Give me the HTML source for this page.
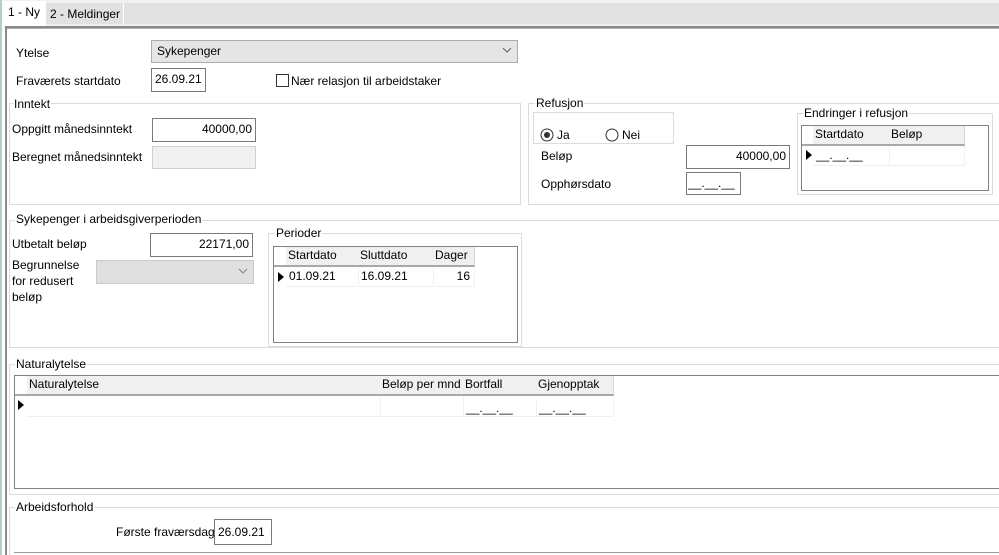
<!DOCTYPE html>
<html style="overflow:hidden"><head><meta charset="utf-8"><style>
*{box-sizing:border-box;margin:0;padding:0}
html,body{width:999px;height:555px;overflow:hidden}
body{background:#fff;font-family:"Liberation Sans",Arial,sans-serif;font-size:12px;color:#000;position:relative}
div,span{position:absolute}
.t{white-space:nowrap;line-height:14px}
.gb{border:1px solid #dcdcdc}
.gt{background:#fff;padding:0 1px;line-height:14px;white-space:nowrap}
.tb{border:1px solid #7a7a7a;background:#fff;line-height:20px;padding:0 3px;white-space:nowrap}
.r{text-align:right}
.grid{border:1px solid #828282;background:#fff}
.h{background:#f0f0f0;border-right:1px solid #d5d5d5;border-bottom:2px solid #a8a8a8;line-height:17px;padding-left:2px;white-space:nowrap}
.c{border-right:1px solid #f0f0f0;border-bottom:1px solid #f0f0f0;line-height:18px;padding-left:3px;white-space:nowrap}
.mask{font-size:12px}
.arr{width:0;height:0;border-top:5px solid transparent;border-bottom:5px solid transparent;border-left:6px solid #000}
</style></head><body>
<div style="left:0;top:0;width:999px;height:28px;background:#f0f0f0"></div>
<div style="left:0;top:0;width:2px;height:555px;background:#b4d0c0"></div>
<div style="left:46px;top:3px;width:953px;height:21px;background:#e1e1e1"></div>
<div style="left:2px;top:1px;width:44px;height:26px;background:#fff"></div>
<div class="t" style="left:8px;top:5px">1 - Ny</div>
<div class="t" style="left:50px;top:7px">2 - Meldinger</div>
<div style="left:123px;top:3px;width:1px;height:21px;background:#fff"></div>
<div style="left:5px;top:26px;width:994px;height:3px;background:#8a8a8a;border-bottom:1px solid #b0b0b0"></div>
<div style="left:5px;top:26px;width:2px;height:529px;background:#8a8a8a"></div>

<div class="t" style="left:16px;top:46px">Ytelse</div>
<div style="left:151px;top:40px;width:367px;height:23px;background:#e5e5e5;border:1px solid #adadad"></div>
<div class="t" style="left:157px;top:44px">Sykepenger</div>
<svg style="position:absolute;left:502px;top:47px" width="10" height="7"><path d="M1 1 L5 5 L9 1" fill="none" stroke="#606060"/></svg>
<div class="t" style="left:16px;top:74px">Fraværets startdato</div>
<div class="tb" style="left:151px;top:68px;width:55px;height:24px">26.09.21</div>
<div style="left:276px;top:74px;width:13px;height:13px;border:1px solid #333;background:#fff"></div>
<div class="t" style="left:291px;top:74px">Nær relasjon til arbeidstaker</div>

<div class="gb" style="left:9px;top:103px;width:512px;height:102px"></div>
<div class="gt" style="left:13px;top:97px">Inntekt</div>
<div class="t" style="left:12px;top:122px">Oppgitt månedsinntekt</div>
<div class="tb r" style="left:152px;top:118px;width:104px;height:24px">40000,00</div>
<div class="t" style="left:12px;top:150px">Beregnet månedsinntekt</div>
<div style="left:152px;top:146px;width:104px;height:23px;background:#f0f0f0;border:1px solid #d0d0d0"></div>

<div class="gb" style="left:528px;top:103px;width:480px;height:102px"></div>
<div class="gt" style="left:535px;top:96px">Refusjon</div>
<div class="gb" style="left:533px;top:112px;width:141px;height:32px"></div>
<svg style="position:absolute;left:540px;top:128px" width="14" height="14"><circle cx="7" cy="7" r="6" fill="#fff" stroke="#333"/><circle cx="7" cy="7" r="3" fill="#333"/></svg>
<div class="t" style="left:557px;top:128px">Ja</div>
<svg style="position:absolute;left:605px;top:128px" width="14" height="14"><circle cx="7" cy="7" r="6" fill="#fff" stroke="#333"/></svg>
<div class="t" style="left:622px;top:128px">Nei</div>
<div class="t" style="left:541px;top:149px">Beløp</div>
<div class="tb r" style="left:686px;top:145px;width:104px;height:24px">40000,00</div>
<div class="t" style="left:541px;top:177px">Opphørsdato</div>
<div class="tb mask" style="left:686px;top:172px;width:55px;height:23px;padding-left:1px">__.__.__</div>
<div class="gb" style="left:797px;top:113px;width:196px;height:82px"></div>
<div class="gt" style="left:803px;top:106px">Endringer i refusjon</div>
<div class="grid" style="left:801px;top:125px;width:188px;height:66px"></div>
<div class="h" style="left:802px;top:126px;width:12px;height:20px;background:#fff;border-right:none"></div>
<div class="h" style="left:813px;top:126px;width:77px;height:20px">Startdato</div>
<div class="h" style="left:889px;top:126px;width:76px;height:20px">Beløp</div>
<div class="arr" style="left:806px;top:150px"></div>
<div class="c mask" style="left:813px;top:146px;width:77px;height:20px">__.__.__</div>
<div class="c" style="left:889px;top:146px;width:76px;height:20px"></div>

<div class="gb" style="left:9px;top:220px;width:1000px;height:128px"></div>
<div class="gt" style="left:15px;top:212px">Sykepenger i arbeidsgiverperioden</div>
<div class="t" style="left:12px;top:237px">Utbetalt beløp</div>
<div class="tb r" style="left:150px;top:233px;width:103px;height:24px">22171,00</div>
<div class="t" style="left:12px;top:257px;line-height:16px">Begrunnelse<br>for redusert<br>beløp</div>
<div style="left:96px;top:260px;width:158px;height:24px;background:#e0e0e0;border:1px solid #c8c8c8"></div>
<svg style="position:absolute;left:238px;top:268px" width="10" height="7"><path d="M1 1 L5 5 L9 1" fill="none" stroke="#808080"/></svg>
<div class="gb" style="left:268px;top:233px;width:254px;height:114px"></div>
<div class="gt" style="left:275px;top:226px">Perioder</div>
<div class="grid" style="left:273px;top:246px;width:245px;height:97px"></div>
<div class="h" style="left:274px;top:247px;width:12px;height:20px;background:#fff;border-right:none"></div>
<div class="h" style="left:286px;top:247px;width:73px;height:20px">Startdato</div>
<div class="h" style="left:358px;top:247px;width:76px;height:20px">Sluttdato</div>
<div class="h" style="left:433px;top:247px;width:42px;height:20px">Dager</div>
<div class="arr" style="left:278px;top:272px"></div>
<div class="c" style="left:286px;top:267px;width:73px;height:20px">01.09.21</div>
<div class="c" style="left:358px;top:267px;width:76px;height:20px">16.09.21</div>
<div class="c r" style="left:433px;top:267px;width:42px;height:20px;padding-right:4px">16</div>

<div class="gb" style="left:9px;top:364px;width:1000px;height:131px"></div>
<div class="gt" style="left:15px;top:357px">Naturalytelse</div>
<div class="grid" style="left:14px;top:375px;width:990px;height:114px"></div>
<div class="h" style="left:15px;top:376px;width:12px;height:20px;background:#fff;border-right:none"></div>
<div class="h" style="left:27px;top:376px;width:354px;height:20px">Naturalytelse</div>
<div class="h" style="left:380px;top:376px;width:84px;height:20px">Beløp per mnd</div>
<div class="h" style="left:463px;top:376px;width:74px;height:20px">Bortfall</div>
<div class="h" style="left:536px;top:376px;width:78px;height:20px">Gjenopptak</div>
<div class="arr" style="left:18px;top:400px"></div>
<div class="c" style="left:27px;top:396px;width:354px;height:21px"></div>
<div class="c" style="left:380px;top:396px;width:84px;height:21px"></div>
<div class="c mask" style="left:463px;top:399px;width:74px;height:18px">__.__.__</div>
<div class="c mask" style="left:536px;top:399px;width:78px;height:18px">__.__.__</div>

<div class="gb" style="left:9px;top:507px;width:1000px;height:48px;border-bottom:none"></div>
<div class="gt" style="left:15px;top:500px">Arbeidsforhold</div>
<div class="t" style="left:116px;top:525px">Første fraværsdag</div>
<div class="tb" style="left:214px;top:519px;width:58px;height:26px;line-height:24px">26.09.21</div>
<div style="left:14px;top:552px;width:990px;height:3px;border-top:1px solid #9a9a9a"></div>
</body></html>
